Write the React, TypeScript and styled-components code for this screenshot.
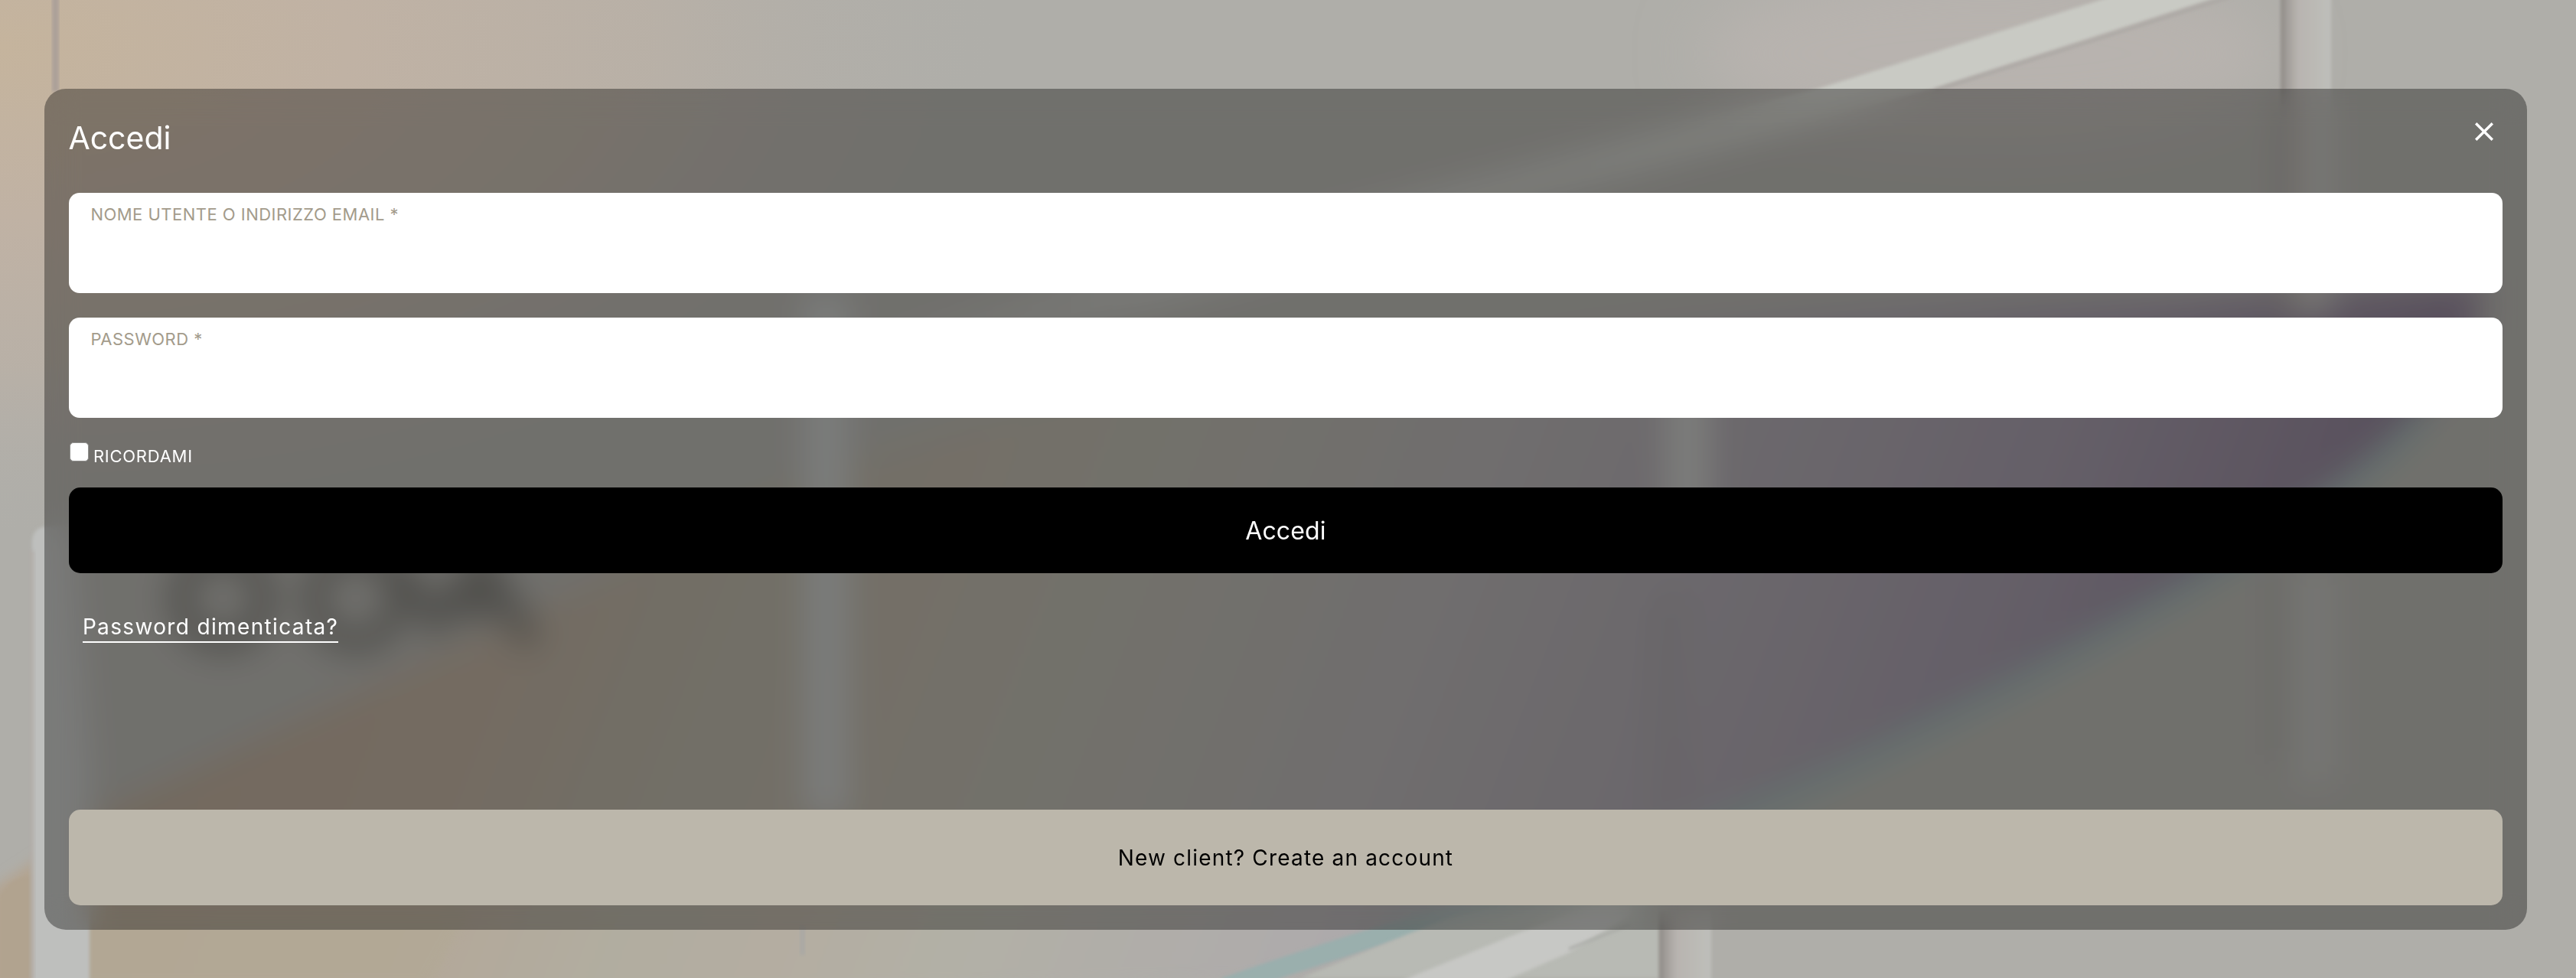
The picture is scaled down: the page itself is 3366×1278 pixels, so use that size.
import { useState } from "react";
import styled, { createGlobalStyle } from "styled-components";

const GlobalStyle = createGlobalStyle`
  * {
    box-sizing: border-box;
  }

  body {
    margin: 0;
    background: #afaea9;
    font-family: Inter, "Open Sans", sans-serif;
  }
`

const Page = styled.div`
  position: relative;
  height: 1278px;
  padding: 116px 64.5px 63.5px 58.4px;
  overflow: hidden;
`

// sits behind the whole page so the panel can blur it
const Backdrop = styled.svg`
  position: absolute;
  top: 0;
  left: 0;
  width: 100%;
  height: 100%;
`

const Panel = styled.section`
  position: relative;
  height: 100%;
  display: flex;
  flex-direction: column;
  padding: 0 32px;
  border-radius: 28px;
  background: rgba(1, 0, 1, 0.355);
  backdrop-filter: blur(20px);
`

const PanelHeader = styled.header`
  height: 135.6px;
  display: flex;
  justify-content: space-between;
  align-items: flex-start;
`

const Title = styled.h2`
  margin: 39px 0 0 -1px;
  font-size: 41px;
  line-height: 50px;
  font-weight: 400;
  color: #fff;
`

const CloseButton = styled.button`
  display: flex;
  margin: 42px 11px 0 0;
  padding: 0;
  border: 0;
  background: none;
  color: #fff;
  cursor: pointer;
`

const LoginForm = styled.form`
  display: flex;
  flex-direction: column;
`

const Field = styled.label`
  height: 131.25px;
  margin-bottom: 32px;
  padding: 14px 28px;
  display: flex;
  flex-direction: column;
  border-radius: 14px;
  background: #fff;
`

const FieldLabel = styled.span`
  font-size: 22px;
  line-height: 28px;
  letter-spacing: 0.48px;
  text-transform: uppercase;
  color: #a39b8b;
`

const FieldInput = styled.input`
  flex-grow: 1;
  border: 0;
  outline: 0;
  padding: 0;
  background: none;
  font: inherit;
  font-size: 28px;
`

const Remember = styled.label`
  height: 58.5px;
  display: flex;
  align-items: flex-start;
  gap: 6px;
  font-size: 22px;
  line-height: 28px;
  letter-spacing: 0.75px;
  color: #fff;

  span {
    margin-top: 4px;
  }
`

const Checkbox = styled.input`
  appearance: none;
  width: 25px;
  height: 25px;
  margin: 0 0 0 0.5px;
  border: 1px solid #8f8f8d;
  border-radius: 5px;
  background: #fff;

  &:checked {
    background: #000;
  }
`

const SubmitButton = styled.button`
  height: 112px;
  padding: 2px 0 0;
  border: 0;
  border-radius: 15px;
  background: #000;
  color: #fff;
  font-family: inherit;
  font-size: 32px;
  letter-spacing: 0.1px;
`

const ForgotLink = styled.a`
  align-self: flex-start;
  margin: 53px 0 0 17.5px;
  padding-bottom: 2px;
  border-bottom: 2.5px solid #fff;
  font-size: 28px;
  line-height: 34px;
  letter-spacing: 1.35px;
  color: #fff;
  text-decoration: none;
`

const CreateAccount = styled.a`
  height: 125px;
  margin-top: auto;
  margin-bottom: 32px;
  padding-top: 2px;
  display: flex;
  justify-content: center;
  align-items: center;
  border-radius: 15px;
  background: #bcb7ab;
  color: #000;
  font-size: 28px;
  letter-spacing: 1.18px;
  text-decoration: none;
`

const CloseIcon = () => (
  <svg width="26" height="28" viewBox="0 0 26 28" fill="none" stroke="currentColor" strokeWidth="3.4">
    <path d="M2.2 3.2 L23.8 24.8 M23.8 3.2 L2.2 24.8" />
  </svg>
)

const Scene = () => (
  <Backdrop viewBox="0 0 3366 1278" preserveAspectRatio="none" aria-hidden="true">
    <defs>
      <radialGradient id="warm" gradientUnits="userSpaceOnUse" cx="0" cy="0" r="1" gradientTransform="translate(0 60) scale(1300 640)">
        <stop offset="0" stopColor="#c5b49d" />
        <stop offset="0.35" stopColor="#c0b2a4" />
        <stop offset="0.65" stopColor="#bbb1a6" stopOpacity="0.8" />
        <stop offset="1" stopColor="#b1afaa" stopOpacity="0" />
      </radialGradient>
      <linearGradient id="sheet" gradientUnits="userSpaceOnUse" x1="300" y1="600" x2="2900" y2="1600">
        <stop offset="0" stopColor="#b3a492" />
        <stop offset="0.15" stopColor="#b4a798" />
        <stop offset="0.25" stopColor="#b1ada0" />
        <stop offset="0.32" stopColor="#b4ada1" />
        <stop offset="0.4" stopColor="#b2b0a6" />
        <stop offset="0.55" stopColor="#aeabab" />
        <stop offset="0.7" stopColor="#a59fa7" />
        <stop offset="0.81" stopColor="#9c93a1" />
        <stop offset="0.94" stopColor="#8b7e91" />
      </linearGradient>
      <linearGradient id="rail" gradientUnits="userSpaceOnUse" x1="1100" y1="0" x2="2500" y2="0">
        <stop offset="0" stopColor="#c4c5c0" stopOpacity="0" />
        <stop offset="0.3" stopColor="#c4c5c0" stopOpacity="0.7" />
        <stop offset="0.65" stopColor="#c6c7c2" stopOpacity="0.75" />
        <stop offset="0.9" stopColor="#c9cac4" />
      </linearGradient>
      <linearGradient id="pole" x1="0" y1="0" x2="1" y2="0">
        <stop offset="0" stopColor="#8f8a86" />
        <stop offset="0.16" stopColor="#a5a19d" />
        <stop offset="0.35" stopColor="#b8b4b0" />
        <stop offset="1" stopColor="#bebfba" />
      </linearGradient>
      <filter id="soft2">
        <feGaussianBlur stdDeviation="2" />
      </filter>
      <filter id="soft8" x="-20%" y="-20%" width="140%" height="140%">
        <feGaussianBlur stdDeviation="8" />
      </filter>
      <filter id="soft40" x="-20%" y="-80%" width="140%" height="260%">
        <feGaussianBlur stdDeviation="40" />
      </filter>
    </defs>

    <rect width="3366" height="1278" fill="#afaea9" />
    <rect width="1300" height="700" fill="url(#warm)" />
    <ellipse cx="2600" cy="70" rx="380" ry="110" fill="#b8b3af" filter="url(#soft40)" />

    {/* iridescent sheet */}
    <path
      d="M-40 1180 L150 1055 L563 860 L760 768 L900 690 C1020 630 1200 560 1500 500 C1900 430 2400 400 2850 392 L3240 370 C3255 450 3165 560 2970 700 C2700 860 2400 1010 2230 1075 C2050 1150 1900 1200 1690 1278 L-40 1320 Z"
      fill="url(#sheet)"
      filter="url(#soft8)"
    />
    <path
      d="M3170 540 C3100 620 3020 670 2930 726 C2700 870 2400 1015 2240 1080 C2070 1150 1880 1192 1600 1290"
      fill="none"
      stroke="#9aafad"
      strokeWidth="25"
      filter="url(#soft2)"
    />
    <path d="M0 1170 C20 1140 34 1148 46 1142 V1278 H0 Z" fill="#b1a38f" filter="url(#soft2)" />
    <path d="M100 1180 H620 L560 1290 H100 Z" fill="#b2a995" opacity="0.7" filter="url(#soft8)" />

    {/* lower rail */}
    <path d="M1890 1200 L2168 1130 V1278 H1700 Z" fill="#b8bab4" filter="url(#soft2)" />
    <path d="M1830 1282 L2000 1213 L2130 1160 L2130 1195 L2050 1245 L1965 1282 Z" fill="#c7c8c5" filter="url(#soft2)" />
    <path d="M2050 1240 L2130 1208" fill="none" stroke="#a9aaa6" strokeWidth="3" filter="url(#soft2)" />

    {/* upper rail */}
    <path d="M2910 -8 L2770 -8 L2375 116 L1400 370 L1100 450 L1100 500 L1500 405 L2525 116 Z" fill="url(#rail)" filter="url(#soft2)" />
    <path d="M2914 -4 L2529 118" stroke="#aca8a4" strokeWidth="4" filter="url(#soft2)" />

    {/* poles */}
    <rect x="68" y="-10" width="9" height="130" fill="#aca099" filter="url(#soft2)" />
    <rect x="2980" y="-10" width="66" height="420" fill="url(#pole)" filter="url(#soft2)" />
    <rect x="2965" y="740" width="22" height="260" fill="#a6a5a0" filter="url(#soft2)" />
    <rect x="2996" y="740" width="56" height="285" fill="#b7b7b3" filter="url(#soft2)" />
    <rect x="1050" y="385" width="60" height="680" fill="#bfc1bf" filter="url(#soft2)" />
    <rect x="1045" y="1210" width="7" height="38" fill="#aaa9a4" filter="url(#soft2)" />
    <rect x="2176" y="510" width="58" height="180" fill="#c1c2bf" filter="url(#soft2)" />
    <rect x="2160" y="780" width="40" height="290" fill="#a09ca0" opacity="0.7" filter="url(#soft8)" />
    <rect x="2168" y="1190" width="68" height="96" fill="url(#pole)" filter="url(#soft2)" />
    <path d="M42 1290 V706 Q44 688 62 688 H92 L117 1000 V1290 Z" fill="#bebfbd" filter="url(#soft2)" />
    <rect x="38" y="720" width="8" height="560" fill="#b1aaa6" opacity="0.5" filter="url(#soft2)" />

    {/* lettering on the wall */}
    <g fill="none" stroke="#716f6a" strokeWidth="29" opacity="0.8" filter="url(#soft8)">
      <ellipse cx="291" cy="782" rx="55" ry="56" />
      <ellipse cx="465" cy="782" rx="55" ry="56" />
      <path d="M520 735 L567 812 L625 735" />
      <path d="M624 800 L634 735 L694 840" />
      <path d="M560 795 H650" />
    </g>
  </Backdrop>
)

const App = () => {
  const [username, setUsername] = useState("")
  const [password, setPassword] = useState("")
  const [remember, setRemember] = useState(false)

  return (
    <>
      <GlobalStyle />
      <Page>
        <Scene />
        <Panel>
          <PanelHeader>
            <Title>Accedi</Title>
            <CloseButton type="button" aria-label="Chiudi">
              <CloseIcon />
            </CloseButton>
          </PanelHeader>
          <LoginForm onSubmit={(e) => e.preventDefault()}>
            <Field>
              <FieldLabel>Nome utente o indirizzo email *</FieldLabel>
              <FieldInput value={username} onChange={(e) => setUsername(e.target.value)} />
            </Field>
            <Field>
              <FieldLabel>Password *</FieldLabel>
              <FieldInput
                type="password"
                value={password}
                onChange={(e) => setPassword(e.target.value)}
              />
            </Field>
            <Remember>
              <Checkbox
                type="checkbox"
                checked={remember}
                onChange={(e) => setRemember(e.target.checked)}
              />
              <span>RICORDAMI</span>
            </Remember>
            <SubmitButton type="submit">Accedi</SubmitButton>
          </LoginForm>
          <ForgotLink href="#">Password dimenticata?</ForgotLink>
          <CreateAccount href="#">New client? Create an account</CreateAccount>
        </Panel>
      </Page>
    </>
  )
}

export default App;
